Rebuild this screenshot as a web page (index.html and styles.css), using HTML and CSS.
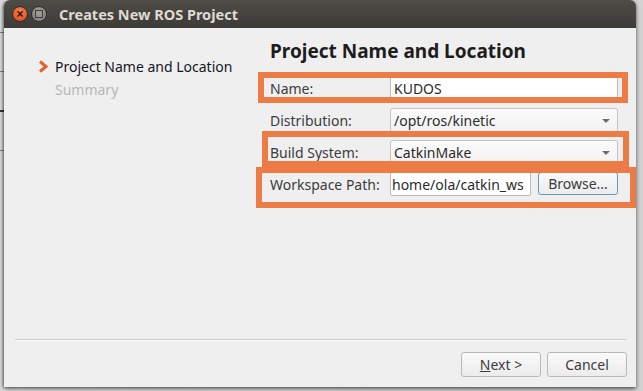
FILE: index.html
```html
<!DOCTYPE html>
<html lang="en">
<head>
    <meta charset="UTF-8">
    <title>Creates New ROS Project</title>
    <link rel="stylesheet" href="styles.css">
</head>
<body>
    <div class="desk-left">
        <div class="frag-line"></div>
        <div class="frag-line"></div>
        <div class="frag-line dark"></div>
        <div class="frag-line"></div>
    </div>

    <div class="window">
        <div class="titlebar">
            <span class="wbtn close">&#215;</span>
            <span class="wbtn mini"><span class="mini-box"></span></span>
            <span class="title">Creates New ROS Project</span>
        </div>

        <div class="content">
            <div class="main">
                <ul class="steps">
                    <li class="step current">
                        <svg class="step-arrow" width="11" height="13" viewBox="0 0 11 13">
                            <polyline points="2,1.5 8,6.5 2,11.5" fill="none" stroke="#e2612a" stroke-width="3" stroke-linejoin="miter"/>
                        </svg>
                        Project Name and Location
                    </li>
                    <li class="step">Summary</li>
                </ul>

                <section class="panel">
                    <h2>Project Name and Location</h2>
                    <div class="form">
                        <label class="lbl">Name:</label>
                        <div class="field text-input">KUDOS</div>

                        <label class="lbl">Distribution:</label>
                        <div class="field combo">/opt/ros/kinetic<span class="caret"></span></div>

                        <label class="lbl">Build System:</label>
                        <div class="field combo">CatkinMake<span class="caret"></span></div>

                        <label class="lbl">Workspace Path:</label>
                        <div class="path-row">
                            <div class="field text-input path">home/ola/catkin_ws</div>
                            <button class="btn browse">Browse...</button>
                        </div>
                    </div>
                </section>
            </div>

            <div class="footer">
                <div class="separator"></div>
                <div class="actions">
                    <button class="btn"><u>N</u>ext &gt;</button>
                    <button class="btn">Cancel</button>
                </div>
            </div>
        </div>

        <!-- recuadros de anotación -->
        <div class="mark mark-name"></div>
        <div class="mark mark-build"></div>
        <div class="mark mark-path"></div>
    </div>
</body>
</html>
```

FILE: styles.css
```css
html, body {
    margin: 0;
    padding: 0;
}
body {
    width: 643px;
    height: 391px;
    overflow: hidden;
    display: flex;
    align-items: flex-start;
    background: linear-gradient(to right, #e4e4e4, #d2d2d2);
    font-family: 'Noto Sans', 'DejaVu Sans', sans-serif;
    color: #3c3c3c;
}
.desk-left {
    width: 4px;
    height: 391px;
    background-color: #dadada;
    display: flex;
    flex-direction: column;
    gap: 38px;
    padding-top: 32px;
    box-sizing: border-box;
}
.frag-line {
    height: 1px;
    background-color: #7d7d7d;
}
.frag-line.dark {
    background-color: #333;
    height: 2px;
}
.window {
    position: relative;
    width: 632px;
    height: 387px;
    background-color: #efefef;
    border-radius: 6px 6px 0 0;
    box-shadow: 0 2px 4px rgba(0, 0, 0, 0.55), -1px 0 3px rgba(0, 0, 0, 0.35);
    display: flex;
    flex-direction: column;
}
.titlebar {
    height: 28px;
    flex: none;
    display: flex;
    align-items: center;
    background: linear-gradient(#4d4c47, #3c3b37);
    border-radius: 6px 6px 0 0;
    padding-left: 8px;
}
.wbtn {
    width: 16px;
    height: 16px;
    border-radius: 50%;
    box-sizing: border-box;
    display: flex;
    align-items: center;
    justify-content: center;
    margin-right: 3px;
}
.close {
    background: radial-gradient(circle at 50% 35%, #f7845a, #e3552a 70%, #c2421b);
    border: 1px solid #3a2a22;
    color: #3c1a0c;
    font-size: 14px;
    font-weight: bold;
    line-height: 1;
}
.mini {
    background: radial-gradient(circle at 50% 35%, #a09e98, #7e7c77);
    border: 1px solid #302f2c;
}
.mini-box {
    width: 6px;
    height: 6px;
    border: 1px solid #3c3b37;
}
.title {
    margin-left: 9px;
    font-weight: bold;
    font-size: 14.5px;
    color: #dfdbd2;
}
.content {
    flex: 1;
    display: flex;
    flex-direction: column;
}
.main {
    flex: 1;
    display: flex;
}
.steps {
    list-style: none;
    margin: 0;
    padding: 27px 0 0 33px;
    width: 234px;
    font-size: 14px;
}
.step {
    position: relative;
    padding-left: 18px;
    line-height: 23px;
    color: #b7b7b7;
}
.step.current {
    color: #16161f;
}
.step-arrow {
    position: absolute;
    left: 1px;
    top: 5px;
}
.panel {
    flex: 1;
    padding: 10px 18px 0 0;
}
h2 {
    margin: 0 0 12px 0;
    font-size: 19px;
    font-weight: bold;
    color: #1d1d1d;
    line-height: 26px;
}
.form {
    display: grid;
    grid-template-columns: 120px 1fr;
    row-gap: 8px;
    align-items: center;
    font-size: 14px;
}
.lbl {
    color: #3c3c3c;
}
.field {
    height: 24px;
    box-sizing: border-box;
    display: flex;
    align-items: center;
    padding-left: 3px;
    color: #2c2c2c;
}
.text-input {
    background-color: #fff;
    border: 1px solid #b9b9b9;
    border-radius: 2px;
}
.combo {
    position: relative;
    background: linear-gradient(#fbfbfb, #f2f2f2);
    border: 1px solid #c4c4c4;
    border-radius: 3px;
}
.caret {
    position: absolute;
    right: 7px;
    top: 10px;
    width: 0;
    height: 0;
    border-left: 4px solid transparent;
    border-right: 4px solid transparent;
    border-top: 4px solid #6c6c6c;
}
.path-row {
    display: flex;
    gap: 7px;
}
.path {
    width: 141px;
    padding-left: 1px;
    overflow: hidden;
    white-space: nowrap;
}
.btn {
    font-family: inherit;
    font-size: 14px;
    color: #3c3c3c;
    background: linear-gradient(#fafafa, #ececec);
    border: 1px solid #b8b8b8;
    border-radius: 3px;
    height: 25px;
    padding: 0;
}
.browse {
    width: 80px;
    height: 23px;
    border-color: #6f95b8;
}
.footer {
    padding: 0 9px 10px 11px;
}
.separator {
    height: 1px;
    background-color: #c9c9c9;
    border-bottom: 1px solid #fafafa;
    margin-bottom: 11px;
}
.actions {
    display: flex;
    justify-content: flex-end;
    gap: 6px;
}
.actions .btn {
    width: 80px;
}
.mark {
    position: absolute;
    border: 6px solid #ec7b45;
    box-sizing: border-box;
}
.mark-name {
    left: 254px;
    top: 72px;
    width: 370px;
    height: 31px;
}
.mark-build {
    left: 258px;
    top: 131px;
    width: 367px;
    height: 36px;
}
.mark-path {
    left: 252px;
    top: 167px;
    width: 380px;
    height: 41px;
}
```
